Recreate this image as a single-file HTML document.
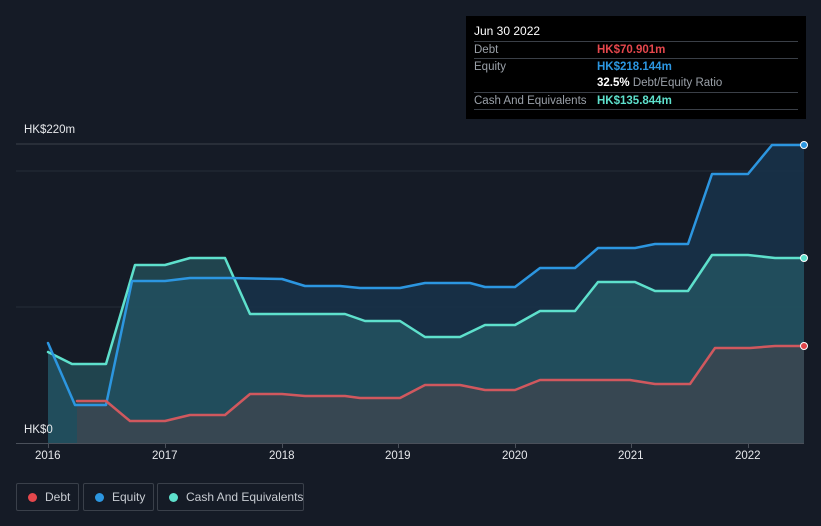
<!DOCTYPE html><html><head><style>
body{margin:0;width:821px;height:526px;background:#151b26;font-family:"Liberation Sans",sans-serif;overflow:hidden;position:relative}
.tt{position:absolute;left:466px;top:16px;width:340px;height:103px;background:#000;color:#fff;font-size:11.5px}
.tt .r{position:absolute;left:8px;right:8px;border-top:1px solid #3a3f47;height:17px;line-height:17px}
.lab{color:#9aa0a8}
.v{position:absolute;left:123px;font-weight:bold}
.leg{position:absolute;top:483px;height:26px;border:1px solid #3a404a;border-radius:2px;color:#c8ccd2;font-size:12px;line-height:26px;white-space:nowrap}
.leg i{display:inline-block;width:9px;height:9px;border-radius:50%;margin:0 8px 0 11px;vertical-align:-1px}
.ax{position:absolute;color:#e6e8eb;font-size:11.5px}
</style></head><body>
<svg width="821" height="526" style="position:absolute;left:0;top:0">
<line x1="16" y1="144" x2="804" y2="144" stroke="#3a404a"/>
<line x1="16" y1="171" x2="804" y2="171" stroke="#252c38"/>
<line x1="16" y1="307" x2="804" y2="307" stroke="#252c38"/>
<polygon fill="#173249" opacity="0.9" points="48,343 75,405 106,405 132,281 165,281 190,278 230,278 282,279 305,286 340,286 360,288 400,288 425,283 470,283 485,287 515,287 540,268 575,268 598,248 635,248 655,244 688,244 712,174 748,174 772,145 804,145 804,443 48,443"/>
<polygon fill="#2a6670" opacity="0.55" points="48,352 72,364 106,364 135,265 165,265 190,258 225,258 250,314 282,314 345,314 365,321 400,321 425,337 460,337 485,325 515,325 540,311 575,311 598,282 635,282 655,291 688,291 712,255 748,255 775,258 804,258 804,443 48,443"/>
<polygon fill="#3d4650" opacity="0.8" points="77,401 106,401 130,421 165,421 190,415 225,415 250,394 282,394 305,396 345,396 360,398 400,398 425,385 460,385 485,390 515,390 540,380 630,380 655,384 690,384 715,348 750,348 775,346 804,346 804,443 77,443"/>
<g fill="none" stroke-width="2.5" stroke-linejoin="round" stroke-linecap="round">
<polyline stroke="#5ee0cc" points="48,352 72,364 106,364 135,265 165,265 190,258 225,258 250,314 282,314 345,314 365,321 400,321 425,337 460,337 485,325 515,325 540,311 575,311 598,282 635,282 655,291 688,291 712,255 748,255 775,258 804,258"/>
<polyline stroke="#2c96e0" points="48,343 75,405 106,405 132,281 165,281 190,278 230,278 282,279 305,286 340,286 360,288 400,288 425,283 470,283 485,287 515,287 540,268 575,268 598,248 635,248 655,244 688,244 712,174 748,174 772,145 804,145"/>
<polyline stroke="#d0585e" points="77,401 106,401 130,421 165,421 190,415 225,415 250,394 282,394 305,396 345,396 360,398 400,398 425,385 460,385 485,390 515,390 540,380 630,380 655,384 690,384 715,348 750,348 775,346 804,346"/>
</g>
<line x1="16" y1="443.5" x2="804" y2="443.5" stroke="#4a505a"/>
<g stroke="#4a505a"><line x1="48.5" y1="443" x2="48.5" y2="448"/><line x1="165.5" y1="443" x2="165.5" y2="448"/><line x1="282.5" y1="443" x2="282.5" y2="448"/><line x1="398.5" y1="443" x2="398.5" y2="448"/><line x1="515.5" y1="443" x2="515.5" y2="448"/><line x1="631.5" y1="443" x2="631.5" y2="448"/><line x1="748.5" y1="443" x2="748.5" y2="448"/></g>
<circle cx="804" cy="145" r="3.5" fill="#2c96e0" stroke="#fff" stroke-width="1"/>
<circle cx="804" cy="258" r="3.5" fill="#5ee0cc" stroke="#fff" stroke-width="1"/>
<circle cx="804" cy="346" r="3.5" fill="#e0454a" stroke="#fff" stroke-width="1"/>
</svg>
<div class="ax" style="left:24px;top:124px">HK$220m</div>
<div class="ax" style="left:24px;top:424px">HK$0</div>
<div class="ax" style="left:35px;top:450px">2016</div>
<div class="ax" style="left:152px;top:450px">2017</div>
<div class="ax" style="left:269px;top:450px">2018</div>
<div class="ax" style="left:385px;top:450px">2019</div>
<div class="ax" style="left:502px;top:450px">2020</div>
<div class="ax" style="left:618px;top:450px">2021</div>
<div class="ax" style="left:735px;top:450px">2022</div>
<div class="tt">
<div style="position:absolute;left:8px;top:8px;font-size:12px">Jun 30 2022</div>
<div class="r" style="top:25px"><span class="lab">Debt</span><span class="v" style="color:#e5474c">HK$70.901m</span></div>
<div class="r" style="top:42px"><span class="lab">Equity</span><span class="v" style="color:#2c96e0">HK$218.144m</span></div>
<div class="r" style="top:59px;border:0"><span class="v" style="color:#fff">32.5% <span class="lab" style="font-weight:normal">Debt/Equity Ratio</span></span></div>
<div class="r" style="top:76px"><span class="lab">Cash And Equivalents</span><span class="v" style="color:#5ee0cc">HK$135.844m</span></div>
<div class="r" style="top:93px;height:0"></div>
</div>
<div class="leg" style="left:16px;width:61px"><i style="background:#e5474c"></i>Debt</div>
<div class="leg" style="left:83px;width:69px"><i style="background:#2c96e0"></i>Equity</div>
<div class="leg" style="left:157px;width:145px"><i style="background:#5ee0cc"></i>Cash And Equivalents</div>
</body></html>
